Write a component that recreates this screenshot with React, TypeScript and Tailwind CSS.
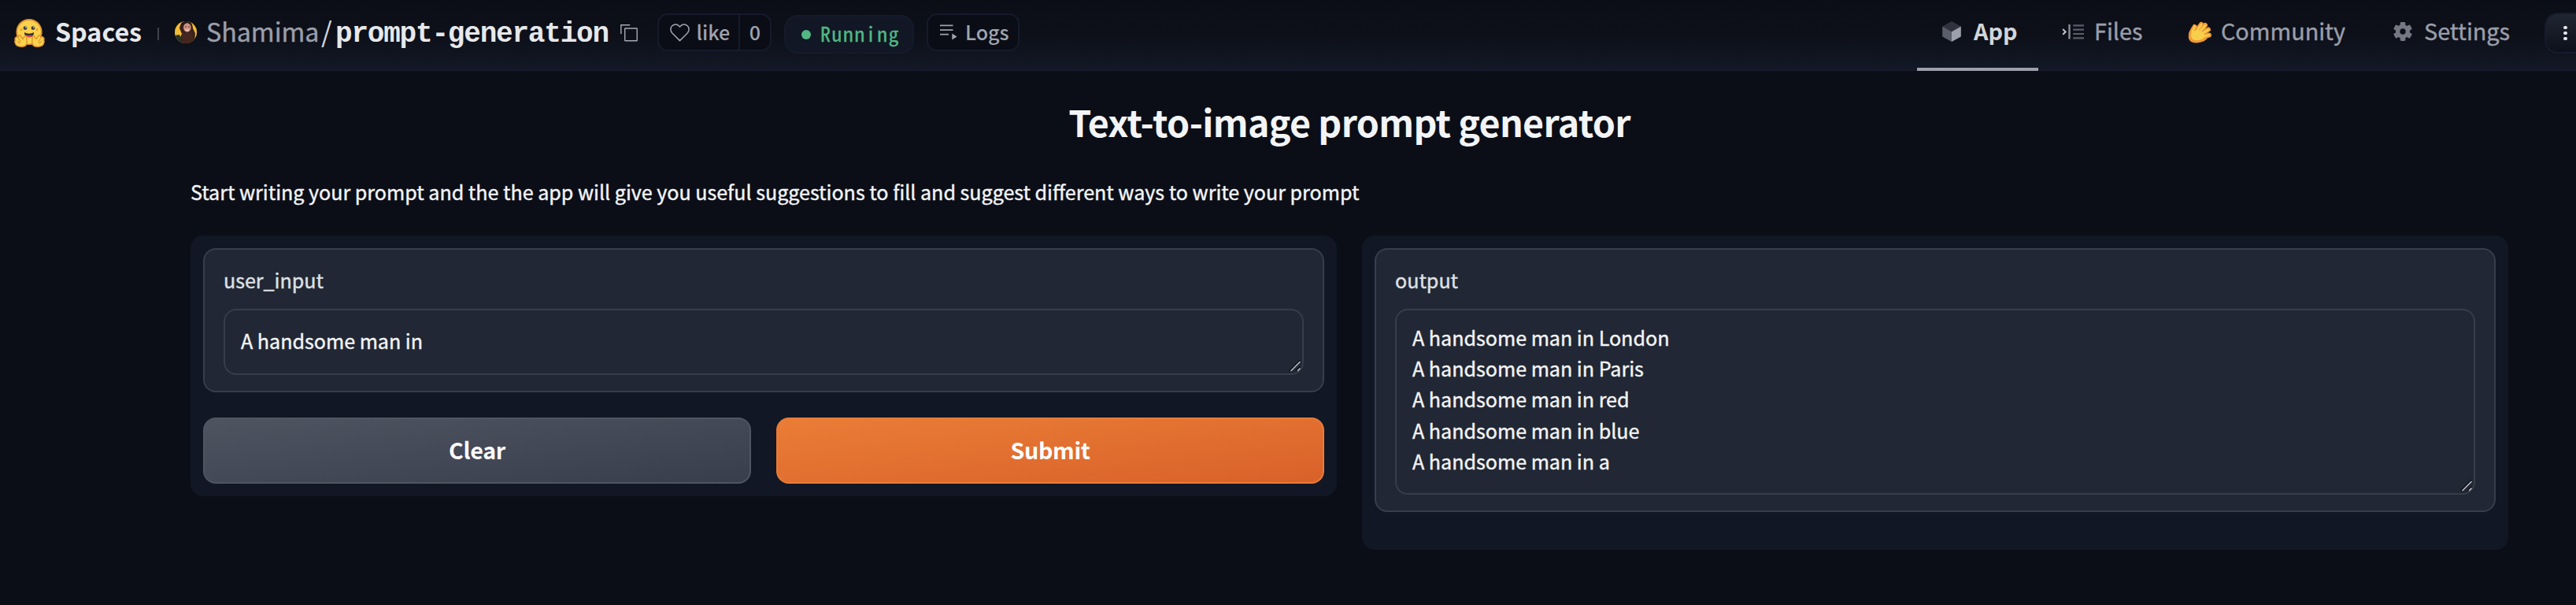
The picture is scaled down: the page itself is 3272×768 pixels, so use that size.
import React from "react";

const outputs = [
  "A handsome man in London",
  "A handsome man in Paris",
  "A handsome man in red",
  "A handsome man in blue",
  "A handsome man in a",
];

function HuggingFace() {
  return (
    <svg className="h-[38px] w-[40px] shrink-0" viewBox="0 0 40 38">
      <circle cx="19" cy="17.5" r="16.6" fill="#e39431" />
      <circle cx="19" cy="17.7" r="14.8" fill="#f8d24c" />
      <circle cx="14" cy="12.6" r="2.4" fill="#3a3b45" />
      <circle cx="24" cy="12.6" r="2.4" fill="#3a3b45" />
      <circle cx="14.8" cy="11.8" r="0.8" fill="#fff" />
      <circle cx="24.8" cy="11.8" r="0.8" fill="#fff" />
      <circle cx="9" cy="14.5" r="1.5" fill="#f29a35" />
      <circle cx="29" cy="14.5" r="1.5" fill="#f29a35" />
      <path d="M13 18c2 1.3 4 1.7 6 1.7s4-.4 6-1.7c.3 3.500-2.200 6.200-6 6.200S12.700 21.500 13 18z" fill="#2f3038" />
      <path d="M15.400 22.700c1-1 2.600-1.300 3.600-.4 1-.9 2.600-.6 3.600.4-1.900 2-5.300 2-7.200 0z" fill="#ea4350" />
      <path d="M2 24.500c1-1.600 2.600-.7 3.500.6l-.3-2c.6-2 2.600-1.700 3.300-.2l2.600 3.600 2.300-3.400c1.300-1.400 3-.4 2.500 1.400-.5 2.500.8 4.400.3 7C15.600 35 12.500 36.500 8.500 36.300 4.500 36 1.500 34 1.200 31c-.6-1-.5-2 .3-2.600-.8-1.400-.4-3 .5-3.900z" fill="#f8d24c" stroke="#e39431" strokeWidth="1.400" />
      <path d="M37 24.500c-1-1.600-2.600-.7-3.500.6l.3-2c-.6-2-2.600-1.700-3.300-.2l-2.600 3.600-2.300-3.400c-1.300-1.400-3-.4-2.500 1.400.5 2.500-.8 4.400-.3 7 .6 3.500 3.700 5 7.700 4.800 4-.3 7-2.300 7.300-5.300.6-1 .5-2-.3-2.600.8-1.400.4-3-.5-3.900z" fill="#f8d24c" stroke="#e39431" strokeWidth="1.400" />
      <path d="M5.500 26l3 4.500M4 29l3.500 3.500M33.500 26l-3 4.500M35 29l-3.500 3.500" stroke="#e39431" strokeWidth="1.100" fill="none" />
    </svg>
  );
}

function Avatar() {
  return (
    <svg className="h-[28px] w-[28px] shrink-0 overflow-hidden rounded-full" viewBox="0 0 28 28">
      <rect width="28" height="28" fill="#f2bd35" />
      <path d="M0 18l6-1 4 11H0z" fill="#22352b" />
      <path d="M6 9C7 1 12-1 16 0c5 .5 7 5 7 9l3 6-1 13H9L7 20l2-4z" fill="#3a211c" />
      <path d="M8 3c3-4 11-4 14 1l-3-1H12l-3 3z" fill="#211617" />
      <ellipse cx="15.800" cy="8" rx="4.800" ry="5.800" fill="#cf9482" />
      <path d="M13 7h2M17 7h2" stroke="#53302b" strokeWidth="1" />
      <path d="M13.500 10.500q2.300 2 4.600 0" stroke="#f7e3dc" strokeWidth="1.100" fill="none" />
      <path d="M9 13q6 5 13 0l2 15H10z" fill="#45271f" />
    </svg>
  );
}

function CopyIcon() {
  return (
    <svg className="h-[22px] w-[22px] shrink-0" viewBox="0 0 22 22" fill="none" stroke="#a6aab4" strokeWidth="1.400">
      <rect x="5.700" y="5" width="15.500" height="15.700" rx="0.500" />
      <path d="M.8 12V.8h11.400" />
    </svg>
  );
}

function HeartIcon() {
  return (
    <svg className="h-[23px] w-[25px] shrink-0" viewBox="0 0 25 23" fill="none" stroke="#a0a4af" strokeWidth="1.500" strokeLinejoin="round">
      <path d="M12.500 21.600L2.800 12C.3 9.400.3 5.300 2.800 2.800c2.600-2.500 6.500-2.300 8.700.2l1 1.100 1-1.100c2.200-2.500 6.100-2.700 8.700-.2 2.500 2.500 2.500 6.600 0 9.200z" />
    </svg>
  );
}

function LogsIcon() {
  return (
    <svg className="h-[20px] w-[22px] shrink-0" viewBox="0 0 22 20" fill="#a0a4af">
      <rect x="0" y="0.500" width="16.500" height="1.700" />
      <rect x="0" y="6.200" width="16.500" height="1.700" />
      <rect x="0" y="11.800" width="11" height="1.700" />
      <path d="M15.300 11.500L21.500 15.500L15.300 19.500z" />
    </svg>
  );
}

function CubeIcon() {
  return (
    <svg className="h-[26px] w-[24px] shrink-0" viewBox="0 0 24 26">
      <path d="M12 0l11.800 6.500L12 13.200.2 6.500z" fill="#30333f" />
      <path d="M.2 6.500L12 13.200V26L.2 19.500z" fill="#5a5e6a" />
      <path d="M23.800 6.500L12 13.200V26l11.800-6.500z" fill="#9ca0ac" />
    </svg>
  );
}

function FilesIcon() {
  return (
    <svg className="h-[19px] w-[28px] shrink-0" viewBox="0 0 28 19" fill="none">
      <path d="M1.200 6l3.400 3.400L1.200 12.800" stroke="#c3c6cd" strokeWidth="2" />
      <path d="M9.500 0v18.500" stroke="#8a8e99" strokeWidth="2.400" />
      <path d="M14.200 1.400H28M14.200 6.700H28M14.200 12H28M14.200 17.300H28" stroke="#5a5e6a" strokeWidth="2.200" />
    </svg>
  );
}

function HandIcon() {
  return (
    <svg className="h-[28px] w-[30px] shrink-0" viewBox="0 0 30 28" strokeLinejoin="round" strokeLinecap="round" fill="none">
      <path
        d="M4 16C5 12.500 7 10 8.500 7M11 12L17 4M14 14L22 5M17 16L26 10.500M18 20L27 17.500"
        stroke="#f09a36"
        strokeWidth="6"
      />
      <path d="M1.500 19c0-5 3-8.500 8.500-9.500s13 3 14.500 8c.8 4.500-2.500 7-8 8.300C9 27.600 1.500 27 1.500 19z" fill="#f09a36" stroke="#f09a36" strokeWidth="1.500" />
      <path d="M4 18.500c-.3-4 3-7 7.500-7s9.500 3 9.800 6.500-3 5-7 5.800c-5 1-10 0-10.300-5.300z" fill="#f8cf4b" />
      <path d="M5.500 15C6 12 7.500 10 8.600 7M11 13L16.800 4.500M14 14L22 5.500M17 16L25.800 11M18 19.500L26.500 17.500" stroke="#f8cf4b" strokeWidth="2.700" />
    </svg>
  );
}

function GearIcon() {
  return (
    <svg className="h-[24px] w-[24px] shrink-0" viewBox="0 0 24 24">
      <g fill="#747883">
        <rect x="8.700" y="0" width="6.600" height="24" rx="1.400" />
        <rect x="8.700" y="0" width="6.600" height="24" rx="1.400" transform="rotate(60 12 12)" />
        <rect x="8.700" y="0" width="6.600" height="24" rx="1.400" transform="rotate(120 12 12)" />
        <circle cx="12" cy="12" r="9" />
      </g>
      <circle cx="12" cy="12" r="3.700" fill="#0c0f18" />
    </svg>
  );
}

function ResizeHandle() {
  return (
    <svg className="absolute right-[1px] bottom-[2px] h-[15px] w-[16px]" viewBox="0 0 16 15" fill="none">
      <path d="M1 14L14.500 .5M9.500 14L14.500 9" stroke="#0b0d14" strokeWidth="2" />
      <path d="M2.500 14L14.500 2M11 14L14.500 10.500" stroke="#b9bbc0" strokeWidth="1.700" />
    </svg>
  );
}

export default function App() {
  return (
    <div className="flex h-[768px] w-[3272px] flex-col overflow-hidden bg-[#0b0e17] font-['Noto_Sans_CJK_JP','Noto_Sans',sans-serif]">
      <header className="flex h-[90px] shrink-0 items-start border-b-2 border-[#161a2a] bg-linear-to-b from-[#0b0d17] via-[#0d1019] to-[#121826] whitespace-nowrap">
        <div className="flex h-[78px] items-center pl-[18px] text-[32.2px] leading-[46px]">
          <div className="mt-[5px]"><HuggingFace /></div>
          <span className="ml-[12px] w-[130px] font-bold text-[#e7e8eb]">Spaces</span>
          <span className="mt-[8px] h-[16px] w-[2px] bg-[#3d424f]" />
          <div className="mt-[4px] ml-[20px]"><Avatar /></div>
          <span className="ml-[12px] w-[146px] text-[#9a9eaa] [-webkit-text-stroke:0.4px]">Shamima</span>
          <span className="w-[18px] text-[35px] text-[#d5d7db]">/</span>
          <span className="mt-[10px] w-[362px] font-['Liberation_Mono',monospace] text-[36px] font-bold tracking-[-1.2px] text-[#e7e8eb]">prompt-generation</span>
          <div className="mt-[5px]"><CopyIcon /></div>
        </div>
        <div className="mt-[17px] ml-[25px] flex h-[48px] w-[145px] shrink-0 items-center rounded-[13px] border-2 border-[#161a2b] bg-[#0b0d16] text-[25.07px] leading-[40px] font-medium text-[#a0a4af]">
          <div className="flex h-full w-[103px] items-center border-r-2 border-[#161a2b] pl-[13.500px]">
            <HeartIcon />
            <span className="-mt-[2px] ml-[9px]">like</span>
          </div>
          <span className="-mt-[2px] flex-1 text-center">0</span>
        </div>
        <div className="mt-[19px] ml-[16px] flex h-[49px] w-[165px] shrink-0 items-center rounded-[17px] border-2 border-[#151b2b] bg-[#111724] pl-[20px]">
          <span className="h-[12px] w-[12px] rounded-full bg-[#53b784]" />
          <span className="-mt-[3px] ml-[12px] font-['Noto_Sans_Mono_CJK_JP',monospace] text-[26px] leading-[40px] tracking-[1.400px] text-[#53b784] [-webkit-text-stroke:0.3px]">Running</span>
        </div>
        <div className="mt-[17px] ml-[16px] flex h-[48px] w-[118px] shrink-0 items-center rounded-[13px] border-2 border-[#161a2b] bg-[#0b0d16] pl-[15px] text-[25.07px] leading-[40px] font-medium text-[#a0a4af]">
          <LogsIcon />
          <span className="-mt-[2px] ml-[10px]">Logs</span>
        </div>
        <nav className="ml-auto flex h-[90px] w-[837px] shrink-0 text-[28.800px] leading-[42px] text-[#9a9eaa] [-webkit-text-stroke:0.4px]">
          <div className="flex h-[90px] w-[154px] flex-col justify-between">
            <div className="flex h-[78px] items-center pl-[32px]">
              <div className="mt-[2px]"><CubeIcon /></div>
              <span className="ml-[16px] font-bold text-[#d3d5d9] [-webkit-text-stroke:0]">App</span>
            </div>
            <div className="h-[4px] bg-[#9ca0aa]" />
          </div>
          <div className="flex h-[78px] w-[158px] items-center pl-[30px]">
            <div className="mt-[2px]"><FilesIcon /></div>
            <span className="ml-[13px]">Files</span>
          </div>
          <div className="flex h-[78px] w-[261px] items-center pl-[32px]">
            <div className="mt-[3px]"><HandIcon /></div>
            <span className="ml-[12px]">Community</span>
          </div>
          <div className="flex h-[78px] w-[224px] items-center pl-[32px]">
            <div className="mt-[2px]"><GearIcon /></div>
            <span className="ml-[15px]">Settings</span>
          </div>
          <div className="mt-[16px] flex h-[52px] w-[40px] flex-col items-start justify-center gap-[2.400px] rounded-l-[17px] border-2 border-r-0 border-[#161b2d] bg-linear-to-b from-[#202633] to-[#0d101a] pl-[22px]">
            <span className="h-[4.600px] w-[4.600px] rounded-full bg-[#e7e8eb]" />
            <span className="h-[4.600px] w-[4.600px] rounded-full bg-[#e7e8eb]" />
            <span className="h-[4.600px] w-[4.600px] rounded-full bg-[#e7e8eb]" />
          </div>
        </nav>
      </header>

      <main className="flex flex-1 flex-col pr-[86px] pl-[242px] text-[25.07px] text-[#f3f4f6] [-webkit-text-stroke:0.4px]">
        <h1 className="mt-[32px] h-[64px] text-center text-[46.500px] leading-[64px] font-bold tracking-[-0.630px] [-webkit-text-stroke:0]">Text-to-image prompt generator</h1>
        <p className="mt-[37px] h-[40px] leading-[40px]">Start writing your prompt and the the app will give you useful suggestions to fill and suggest different ways to write your prompt</p>
        <div className="mt-[36px] flex items-start gap-[32px]">
          <section className="flex h-[331px] w-[1456px] flex-col rounded-[16px] bg-[#111724] p-[16px]">
            <div className="h-[183px] rounded-[16px] border-2 border-[#373d4a] bg-[#212734] px-[24px] pt-[18px]">
              <label className="block h-[40px] leading-[40px] text-[#dfe1e5]">user_input</label>
              <div className="relative mt-[17px] flex h-[84px] items-center rounded-[16px] border-2 border-[#373d4a] pl-[20px]">
                <span className="-mt-[3px] leading-[39.200px]">A handsome man in</span>
                <ResizeHandle />
              </div>
            </div>
            <div className="mt-[32px] flex gap-[32px] text-[28.650px] leading-[42px] font-bold tracking-[-0.300px] text-white [-webkit-text-stroke:0]">
              <button className="h-[84px] flex-1 rounded-[16px] border-2 border-[#505562] bg-linear-to-br from-[#4f5461] to-[#393e4d] pb-[3px]">Clear</button>
              <button className="h-[84px] flex-1 rounded-[16px] border-2 border-[#e87c37] bg-linear-to-br from-[#ea7d36] to-[#d9612a] pb-[3px]">Submit</button>
            </div>
          </section>
          <section className="h-[399px] w-[1456px] rounded-[16px] bg-[#111724] p-[16px]">
            <div className="h-[335px] rounded-[16px] border-2 border-[#373d4a] bg-[#212734] px-[24px] pt-[18px]">
              <label className="block h-[40px] leading-[40px] text-[#dfe1e5]">output</label>
              <div className="relative mt-[17px] h-[236px] rounded-[16px] border-2 border-[#373d4a] pt-[15px] pl-[20px]">
                {outputs.map((line) => (
                  <div key={line} className="leading-[39.200px]">{line}</div>
                ))}
                <ResizeHandle />
              </div>
            </div>
          </section>
        </div>
      </main>
    </div>
  );
}
